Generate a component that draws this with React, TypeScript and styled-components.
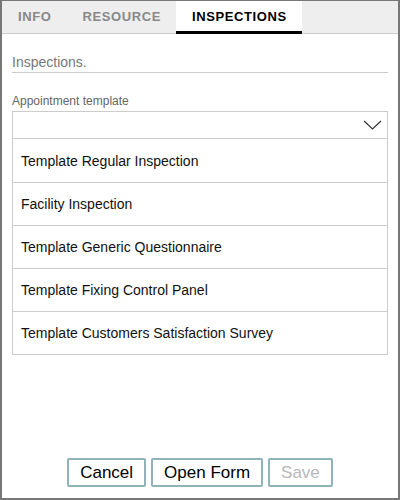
import React from 'react';
import styled, { createGlobalStyle } from 'styled-components';

const GlobalStyle = createGlobalStyle`
  * { box-sizing: border-box; }
  body {
    margin: 0;
    font-family: "Liberation Sans", Arial, sans-serif;
  }
`;

const Frame = styled.div`
  width: 400px;
  height: 500px;
  border: 2px solid #777777;
  border-top-width: 1px;
  background: #ffffff;
  display: flex;
  flex-direction: column;
`;

const TabBar = styled.div`
  display: flex;
  height: 33px;
  background: #eeeeee;
  border-bottom: 1px solid #cccccc;
`;

const Tab = styled.div<{ $active?: boolean }>`
  display: flex;
  align-items: center;
  padding: 1px 15px 0 16px;
  font-size: 13px;
  font-weight: bold;
  letter-spacing: 0.6px;
  color: ${p => (p.$active ? '#000000' : '#888888')};
  background: ${p => (p.$active ? '#ffffff' : 'transparent')};
  border-bottom: 3px solid ${p => (p.$active ? '#000000' : 'transparent')};
  margin-bottom: -1px;
`;

const Body = styled.div`
  flex: 1;
  padding: 20px 10px 0 10px;
  display: flex;
  flex-direction: column;
`;

const SectionTitle = styled.div`
  font-size: 14px;
  color: #777777;
  padding-bottom: 2px;
  border-bottom: 1px solid #cccccc;
`;

const FieldLabel = styled.div`
  margin-top: 21px;
  font-size: 12px;
  color: #666666;
`;

const SelectBox = styled.div`
  margin-top: 3px;
  height: 28px;
  border: 1px solid #cccccc;
  display: flex;
  align-items: center;
  justify-content: flex-end;
  padding-right: 5px;
`;

const OptionList = styled.div`
  border: 1px solid #cccccc;
  border-top: none;
`;

const OptionRow = styled.div`
  height: 43px;
  display: flex;
  align-items: center;
  padding-left: 8px;
  font-size: 14px;
  color: #111111;
  & + & {
    border-top: 1px solid #cccccc;
  }
`;

const Footer = styled.div`
  margin-top: auto;
  display: flex;
  justify-content: center;
  gap: 5px;
  padding: 0 0 11px 0;
`;

const Button = styled.button<{ $disabled?: boolean }>`
  height: 29px;
  padding: 0 11px;
  background: #ffffff;
  border: 2px solid #8fb3b8;
  border-radius: 2px;
  font-family: "Liberation Sans", Arial, sans-serif;
  font-size: 17px;
  color: ${p => (p.$disabled ? '#b8b8b8' : '#000000')};
`;

const templates = [
  'Template Regular Inspection',
  'Facility Inspection',
  'Template Generic Questionnaire',
  'Template Fixing Control Panel',
  'Template Customers Satisfaction Survey',
];

export default function App() {
  return (
    <>
      <GlobalStyle />
      <Frame>
        <TabBar>
          <Tab>INFO</Tab>
          <Tab>RESOURCE</Tab>
          <Tab $active>INSPECTIONS</Tab>
        </TabBar>
        <Body>
          <SectionTitle>Inspections.</SectionTitle>
          <FieldLabel>Appointment template</FieldLabel>
          <SelectBox>
            <svg width="19" height="10" viewBox="0 0 19 10">
              <path d="M1 1 L9.5 9 L18 1" fill="none" stroke="#333" strokeWidth="1.2" />
            </svg>
          </SelectBox>
          <OptionList>
            {templates.map(t => (
              <OptionRow key={t}>{t}</OptionRow>
            ))}
          </OptionList>
          <Footer>
            <Button>Cancel</Button>
            <Button>Open Form</Button>
            <Button $disabled>Save</Button>
          </Footer>
        </Body>
      </Frame>
    </>
  );
}
